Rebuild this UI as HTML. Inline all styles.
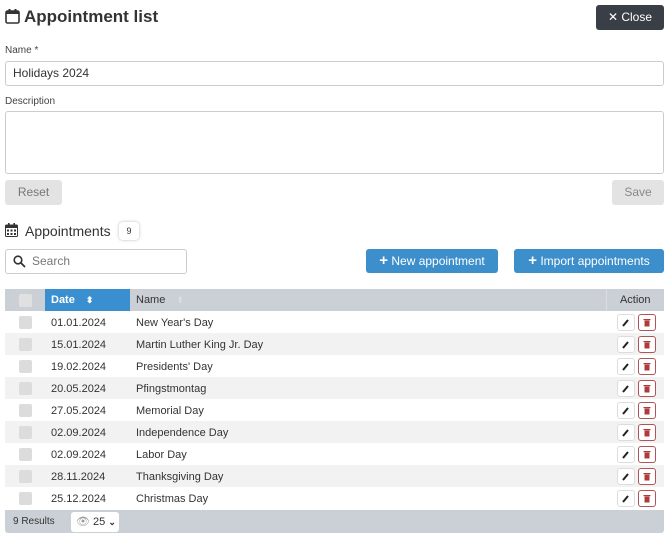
<!DOCTYPE html>
<html><head><meta charset="utf-8">
<style>
*{box-sizing:border-box;margin:0;padding:0}
body{width:670px;height:540px;background:#fff;font-family:"Liberation Sans",sans-serif;color:#333;position:relative;overflow:hidden}
.abs{position:absolute}
h1{position:absolute;left:24px;top:7px;font-size:17px;font-weight:bold;color:#333}
.close{left:596px;top:5px;width:68px;height:25px;background:#3a3f47;color:#fff;border-radius:3px;font-size:12px;text-align:center;line-height:25px}
.lbl{font-size:10px;color:#444}
.inp{border:1px solid #ccc;border-radius:3px;background:#fff}
.btn{border-radius:3px;font-size:12px;text-align:center}
.blue{background:#3d8fcc;color:#fff}
table{position:absolute;left:5px;top:289px;width:659px;border-collapse:collapse;font-size:11px}
th{height:22px;padding:0 6px;text-align:left;vertical-align:middle;line-height:22px;background:#cbd0d6;font-weight:normal;color:#333}
td{height:22px;padding:0 6px;text-align:left;vertical-align:middle;line-height:22px}
td span.t{position:relative;top:1px}
tr:nth-child(odd) td{background:#f2f2f2}
.cb{display:inline-block;width:13px;height:13px;background:#dcdcdc;border-radius:2px;vertical-align:middle}
.ed,.dl{display:inline-block;width:18px;height:17px;border:1px solid #ddd;border-radius:3px;background:#fff;vertical-align:middle;position:relative;line-height:0}
.dl{border-color:#b05555;margin-left:3px}
.act{text-align:right;padding-right:8px}
</style></head><body>
<svg class="abs" style="left:5px;top:8px" width="15" height="16" viewBox="0 0 15 16"><rect x="1" y="3" width="13" height="12" rx="1.5" fill="none" stroke="#333" stroke-width="1.6"/><rect x="1" y="3" width="13" height="3" fill="#333"/><rect x="3.5" y="1" width="2" height="4" fill="#333"/><rect x="9.5" y="1" width="2" height="4" fill="#333"/></svg>
<h1>Appointment list</h1>
<div class="abs close">✕ Close</div>
<div class="abs lbl" style="left:5px;top:45px">Name *</div>
<div class="abs inp" style="left:5px;top:61px;width:659px;height:25px;font-size:12px;line-height:23px;padding-left:7px">Holidays 2024</div>
<div class="abs lbl" style="left:5px;top:96px">Description</div>
<div class="abs inp" style="left:5px;top:111px;width:659px;height:63px"></div>
<div class="abs btn" style="left:5px;top:180px;width:57px;height:25px;line-height:25px;background:#e3e3e3;color:#777">Reset</div>
<div class="abs btn" style="left:612px;top:180px;width:52px;height:25px;line-height:25px;background:#e3e3e3;color:#888">Save</div>
<svg class="abs" style="left:5px;top:223px" width="13" height="14" viewBox="0 0 13 14"><rect x="0.5" y="2" width="12" height="11.5" rx="1" fill="none" stroke="#333"/><rect x="0.5" y="2" width="12" height="3" fill="#333"/><rect x="3" y="0" width="1.6" height="3.5" fill="#333"/><rect x="8.4" y="0" width="1.6" height="3.5" fill="#333"/><g fill="#333"><rect x="2" y="6.5" width="2" height="2"/><rect x="5.5" y="6.5" width="2" height="2"/><rect x="9" y="6.5" width="2" height="2"/><rect x="2" y="10" width="2" height="2"/><rect x="5.5" y="10" width="2" height="2"/><rect x="9" y="10" width="2" height="2"/></g></svg>
<div class="abs" style="left:25px;top:223px;font-size:14px;color:#333">Appointments</div>
<div class="abs" style="left:119px;top:222px;width:20px;height:18px;border-radius:4px;background:#fff;box-shadow:0 0 3px #bbb;font-size:9px;text-align:center;line-height:18px">9</div>
<div class="abs inp" style="left:5px;top:249px;width:182px;height:25px;font-size:12px;line-height:23px;padding-left:26px;color:#777">Search</div>
<svg class="abs" style="left:13px;top:255px" width="13" height="13" viewBox="0 0 13 13"><circle cx="5" cy="5" r="3.8" fill="none" stroke="#333" stroke-width="1.6"/><line x1="8" y1="8" x2="12" y2="12" stroke="#333" stroke-width="1.8"/></svg>
<div class="abs btn blue" style="left:366px;top:249px;width:132px;height:24px;line-height:24px"><b style="font-size:15px">+</b> New appointment</div>
<div class="abs btn blue" style="left:514px;top:249px;width:150px;height:24px;line-height:24px"><b style="font-size:15px">+</b> Import appointments</div>
<table>
<tr><th style="width:40px;text-align:center"><span class="cb" style="background:#e0e0e0"></span></th><th style="width:85px;background:#3a8fd0;color:#fff;font-weight:bold">Date <span style="font-size:9px;margin-left:8px">⬍</span></th><th>Name <span style="color:#ddd;font-size:9px;margin-left:8px">⬍</span></th><th style="width:58px;text-align:center;border-left:1px solid #ddd">Action</th></tr>
<tr><td style="text-align:center"><span class="cb"></span></td><td><span class="t">01.01.2024</span></td><td><span class="t">New Year's Day</span></td><td class="act"><span class="ed"><svg width="16" height="15"><path d="M5 11 L10 5" stroke="#222" stroke-width="2"/></svg></span><span class="dl"><svg width="16" height="15"><rect x="5.5" y="5.5" width="5" height="6" fill="#b03a3a"/><rect x="4.5" y="4" width="7" height="1.2" fill="#b03a3a"/></svg></span></td></tr>
<tr><td style="text-align:center"><span class="cb"></span></td><td><span class="t">15.01.2024</span></td><td><span class="t">Martin Luther King Jr. Day</span></td><td class="act"><span class="ed"><svg width="16" height="15"><path d="M5 11 L10 5" stroke="#222" stroke-width="2"/></svg></span><span class="dl"><svg width="16" height="15"><rect x="5.5" y="5.5" width="5" height="6" fill="#b03a3a"/><rect x="4.5" y="4" width="7" height="1.2" fill="#b03a3a"/></svg></span></td></tr>
<tr><td style="text-align:center"><span class="cb"></span></td><td><span class="t">19.02.2024</span></td><td><span class="t">Presidents' Day</span></td><td class="act"><span class="ed"><svg width="16" height="15"><path d="M5 11 L10 5" stroke="#222" stroke-width="2"/></svg></span><span class="dl"><svg width="16" height="15"><rect x="5.5" y="5.5" width="5" height="6" fill="#b03a3a"/><rect x="4.5" y="4" width="7" height="1.2" fill="#b03a3a"/></svg></span></td></tr>
<tr><td style="text-align:center"><span class="cb"></span></td><td><span class="t">20.05.2024</span></td><td><span class="t">Pfingstmontag</span></td><td class="act"><span class="ed"><svg width="16" height="15"><path d="M5 11 L10 5" stroke="#222" stroke-width="2"/></svg></span><span class="dl"><svg width="16" height="15"><rect x="5.5" y="5.5" width="5" height="6" fill="#b03a3a"/><rect x="4.5" y="4" width="7" height="1.2" fill="#b03a3a"/></svg></span></td></tr>
<tr><td style="text-align:center"><span class="cb"></span></td><td><span class="t">27.05.2024</span></td><td><span class="t">Memorial Day</span></td><td class="act"><span class="ed"><svg width="16" height="15"><path d="M5 11 L10 5" stroke="#222" stroke-width="2"/></svg></span><span class="dl"><svg width="16" height="15"><rect x="5.5" y="5.5" width="5" height="6" fill="#b03a3a"/><rect x="4.5" y="4" width="7" height="1.2" fill="#b03a3a"/></svg></span></td></tr>
<tr><td style="text-align:center"><span class="cb"></span></td><td><span class="t">02.09.2024</span></td><td><span class="t">Independence Day</span></td><td class="act"><span class="ed"><svg width="16" height="15"><path d="M5 11 L10 5" stroke="#222" stroke-width="2"/></svg></span><span class="dl"><svg width="16" height="15"><rect x="5.5" y="5.5" width="5" height="6" fill="#b03a3a"/><rect x="4.5" y="4" width="7" height="1.2" fill="#b03a3a"/></svg></span></td></tr>
<tr><td style="text-align:center"><span class="cb"></span></td><td><span class="t">02.09.2024</span></td><td><span class="t">Labor Day</span></td><td class="act"><span class="ed"><svg width="16" height="15"><path d="M5 11 L10 5" stroke="#222" stroke-width="2"/></svg></span><span class="dl"><svg width="16" height="15"><rect x="5.5" y="5.5" width="5" height="6" fill="#b03a3a"/><rect x="4.5" y="4" width="7" height="1.2" fill="#b03a3a"/></svg></span></td></tr>
<tr><td style="text-align:center"><span class="cb"></span></td><td><span class="t">28.11.2024</span></td><td><span class="t">Thanksgiving Day</span></td><td class="act"><span class="ed"><svg width="16" height="15"><path d="M5 11 L10 5" stroke="#222" stroke-width="2"/></svg></span><span class="dl"><svg width="16" height="15"><rect x="5.5" y="5.5" width="5" height="6" fill="#b03a3a"/><rect x="4.5" y="4" width="7" height="1.2" fill="#b03a3a"/></svg></span></td></tr>
<tr><td style="text-align:center"><span class="cb"></span></td><td><span class="t">25.12.2024</span></td><td><span class="t">Christmas Day</span></td><td class="act"><span class="ed"><svg width="16" height="15"><path d="M5 11 L10 5" stroke="#222" stroke-width="2"/></svg></span><span class="dl"><svg width="16" height="15"><rect x="5.5" y="5.5" width="5" height="6" fill="#b03a3a"/><rect x="4.5" y="4" width="7" height="1.2" fill="#b03a3a"/></svg></span></td></tr>
</table>
<div class="abs" style="left:5px;top:510px;width:659px;height:23px;background:#cbd0d6;border-radius:0 0 3px 3px"></div>
<div class="abs" style="left:13px;top:516px;font-size:10px;color:#333">9 Results</div>
<div class="abs" style="left:71px;top:512px;width:48px;height:20px;background:#fff;border-radius:3px;font-size:11px;line-height:20px;padding-left:5px"><span style="color:#999">👁</span> 25 <b style="font-size:9px">⌄</b></div>
</body></html>
